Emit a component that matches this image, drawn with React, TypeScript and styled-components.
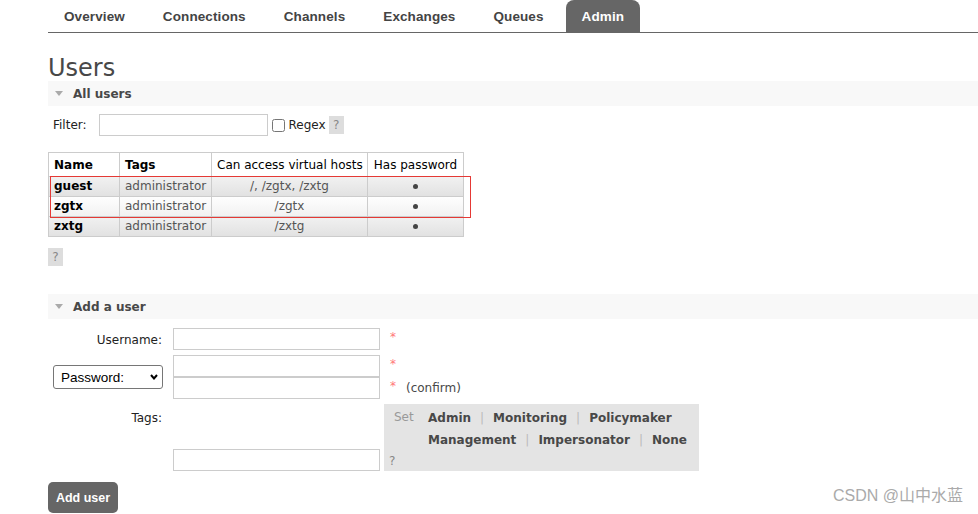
import React from "react";
import styled, { createGlobalStyle, css } from "styled-components";

const GlobalStyle = createGlobalStyle`
  html, body {
    margin: 0;
    padding: 0;
    background: #fff;
    overflow: hidden;
  }
  body {
    font-family: "DejaVu Sans", Verdana, sans-serif;
    font-size: 12px;
    color: #484848;
  }
  * {
    box-sizing: border-box;
  }
`;

const Page = styled.div`
  position: relative;
  height: 514px;
  padding-left: 48px;
`;

const Nav = styled.ul`
  display: flex;
  gap: 6px;
  margin: 0;
  padding: 0;
  list-style: none;
  border-bottom: 1px solid #666;
`;

const Tab = styled.li<{ $active?: boolean }>`
  height: 32px;
  line-height: 33px;
  padding: 0 16px;
  font-family: "Liberation Sans", Arial, sans-serif;
  font-weight: bold;
  font-size: 13.5px;
  letter-spacing: 0.1px;
  color: #444;
  border-radius: 8px 8px 0 0;
  ${(p) =>
    p.$active &&
    css`
      background: #666;
      color: #fff;
    `}
`;

const Title = styled.h1`
  margin: 23px 0 0;
  font-size: 24px;
  line-height: 25px;
  font-weight: normal;
  color: #484848;
`;

const SectionHeader = styled.h2<{ $gap?: number }>`
  display: flex;
  align-items: center;
  gap: 10px;
  margin: ${(p) => p.$gap ?? 0}px 0 0;
  height: 25px;
  padding-left: 7px;
  background: #f8f8f8;
  font-size: 12px;
  font-weight: bold;
  color: #484848;
`;

const Arrow = () => (
  <svg width="8" height="5" viewBox="0 0 8 5">
    <path d="M0 0 L8 0 L4 5 Z" fill="#aaa" />
  </svg>
);

const FilterRow = styled.div`
  display: flex;
  align-items: center;
  height: 22px;
  margin-top: 8px;
  padding-left: 5px;
  color: #222;
`;

const TextInput = styled.input<{ $w: number; $ml?: number }>`
  display: block;
  width: ${(p) => p.$w}px;
  height: 22px;
  margin: 0 0 0 ${(p) => p.$ml ?? 0}px;
  padding: 2px 4px;
  border: 1px solid #ccc;
  font: inherit;
  outline: none;
  background: #fff;
`;

const Check = styled.input`
  width: 13px;
  height: 13px;
  margin: 0 4px;
`;

const Help = styled.span<{ $ml?: number }>`
  display: inline-block;
  width: 15px;
  height: 18px;
  line-height: 18px;
  margin-left: ${(p) => p.$ml ?? 0}px;
  text-align: center;
  background: #ddd;
  color: #888;
`;

const TableWrap = styled.div`
  position: relative;
  width: fit-content;
  margin-top: 16px;
`;

const UserTable = styled.table`
  border-collapse: collapse;
  table-layout: fixed;
  width: 415px;
`;

const Th = styled.th<{ $w: number; $center?: boolean; $bold?: boolean }>`
  width: ${(p) => p.$w}px;
  height: 24px;
  padding: 0 5px;
  line-height: 22px;
  text-align: ${(p) => (p.$center ? "center" : "left")};
  font-weight: ${(p) => (p.$bold ? "bold" : "normal")};
  color: #000;
  background: #fff;
  border: 1px solid #ccc;
  white-space: nowrap;
`;

const Row = styled.tr<{ $alt: boolean }>`
  background: ${(p) =>
    p.$alt
      ? "linear-gradient(#fefefe, #f1f1f1)"
      : "linear-gradient(#f1f1f1, #e1e1e1)"};
`;

const Td = styled.td<{ $center?: boolean; $strong?: boolean }>`
  height: 20px;
  padding: 0 5px;
  line-height: 19px;
  text-align: ${(p) => (p.$center ? "center" : "left")};
  font-weight: ${(p) => (p.$strong ? "bold" : "normal")};
  color: ${(p) => (p.$strong ? "#000" : "#555")};
  border: 1px solid #ccc;
  white-space: nowrap;
`;

const Dot = styled.span`
  display: inline-block;
  width: 5px;
  height: 5px;
  border-radius: 50%;
  background: #444;
  vertical-align: middle;
`;

const Highlight = styled.div`
  position: absolute;
  left: 2px;
  top: 24px;
  width: 421px;
  height: 42px;
  border: 1px solid #e53935;
  pointer-events: none;
`;

const HelpLine = styled.div`
  margin-top: 11px;
`;

const Form = styled.div`
  display: grid;
  grid-template-columns: 125px 207px auto;
  row-gap: 5px;
  margin-top: 9px;
  align-items: start;
`;

const Label = styled.label<{ $pt?: number }>`
  display: block;
  padding: ${(p) => p.$pt ?? 2}px 11px 0 0;
  line-height: 20px;
  text-align: right;
  color: #222;
`;

const Stack = styled.div<{ $end?: boolean }>`
  display: flex;
  flex-direction: column;
  align-self: ${(p) => (p.$end ? "end" : "start")};
`;

const Note = styled.div`
  display: flex;
  align-items: center;
  height: 22px;
  padding-left: 10px;
  color: #484848;
`;

const Star = styled.span<{ $up?: boolean }>`
  position: relative;
  top: ${(p) => (p.$up ? -2 : 0)}px;
  color: #f77;
  margin-right: 10px;
`;

const SelectWrap = styled.div`
  position: relative;
  width: 110px;
  margin-left: 5px;
  align-self: center;
`;

const Select = styled.select`
  appearance: none;
  display: block;
  width: 110px;
  height: 24px;
  margin: 0;
  padding: 0 0 0 7px;
  border: 1px solid #767676;
  border-radius: 3px;
  background: #fff;
  font: 13.5px "Liberation Sans", Arial, sans-serif;
  color: #000;
`;

const Chevron = styled.svg`
  position: absolute;
  right: 5px;
  top: 9px;
  pointer-events: none;
`;

const TagBox = styled.div`
  width: 315px;
  margin-left: 4px;
  padding-top: 3px;
  background: #e4e4e4;
  line-height: 22px;
`;

const TagGrid = styled.div`
  display: grid;
  grid-template-columns: 34px auto;
  padding-left: 10px;
`;

const SetWord = styled.span`
  color: #999;
  line-height: 20px;
`;

const TagLink = styled.span`
  font-weight: bold;
  color: #484848;
`;

const Sep = styled.span`
  margin: 0 9px;
  color: #bbb;
`;

const TagHelp = styled.div`
  padding-left: 5px;
  line-height: 20px;
  color: #888;
`;

const Button = styled.button`
  display: block;
  width: 70px;
  height: 31px;
  margin-top: 11px;
  padding: 0;
  border: none;
  border-radius: 5px;
  background: #666;
  color: #fff;
  font: bold 12.5px "Liberation Sans", Arial, sans-serif;
`;

const Watermark = styled.div`
  position: absolute;
  top: 486px;
  right: 15px;
  font: 16px "Liberation Sans", "Noto Sans CJK SC", sans-serif;
  line-height: 20px;
  color: #aaa;
`;

const tabs = ["Overview", "Connections", "Channels", "Exchanges", "Queues", "Admin"];

const users = [
  { name: "guest", tags: "administrator", vhosts: "/, /zgtx, /zxtg" },
  { name: "zgtx", tags: "administrator", vhosts: "/zgtx" },
  { name: "zxtg", tags: "administrator", vhosts: "/zxtg" },
];

const tagRows = [
  ["Admin", "Monitoring", "Policymaker"],
  ["Management", "Impersonator", "None"],
];

export default function App() {
  return (
    <Page>
      <GlobalStyle />
      <Nav>
        {tabs.map((t) => (
          <Tab key={t} $active={t === "Admin"}>
            {t}
          </Tab>
        ))}
      </Nav>

      <Title>Users</Title>

      <SectionHeader>
        <Arrow />
        All users
      </SectionHeader>
      <FilterRow>
        Filter:
        <TextInput type="text" $w={169} $ml={12} />
        <Check type="checkbox" />
        Regex
        <Help $ml={3}>?</Help>
      </FilterRow>

      <TableWrap>
        <UserTable>
          <thead>
            <tr>
              <Th $w={71} $bold>Name</Th>
              <Th $w={92} $bold>Tags</Th>
              <Th $w={156} $center>Can access virtual hosts</Th>
              <Th $w={96} $center>Has password</Th>
            </tr>
          </thead>
          <tbody>
            {users.map((u, i) => (
              <Row key={u.name} $alt={i % 2 === 1}>
                <Td $strong>{u.name}</Td>
                <Td>{u.tags}</Td>
                <Td $center>{u.vhosts}</Td>
                <Td $center>
                  <Dot />
                </Td>
              </Row>
            ))}
          </tbody>
        </UserTable>
        <Highlight />
      </TableWrap>
      <HelpLine>
        <Help>?</Help>
      </HelpLine>

      <SectionHeader $gap={28}>
        <Arrow />
        Add a user
      </SectionHeader>
      <Form>
        <Label>Username:</Label>
        <TextInput type="text" $w={207} />
        <Note>
          <Star $up>*</Star>
        </Note>

        <SelectWrap>
          <Select defaultValue="password">
            <option value="password">Password:</option>
            <option value="hash">Password hash:</option>
          </Select>
          <Chevron width="8" height="6" viewBox="0 0 8 6">
            <path d="M1 1 L4 4.5 L7 1" fill="none" stroke="#000" strokeWidth="2" />
          </Chevron>
        </SelectWrap>
        <Stack>
          <TextInput type="password" $w={207} />
          <TextInput type="password" $w={207} />
        </Stack>
        <Stack>
          <Note>
            <Star $up>*</Star>
          </Note>
          <Note>
            <Star $up>*</Star>(confirm)
          </Note>
        </Stack>

        <Label $pt={4}>Tags:</Label>
        <Stack $end>
          <TextInput type="text" $w={207} />
        </Stack>
        <TagBox>
          <TagGrid>
            <SetWord>Set</SetWord>
            <div>
              {tagRows.map((row) => (
                <div key={row[0]}>
                  {row.map((tag, j) => (
                    <React.Fragment key={tag}>
                      {j > 0 && <Sep>|</Sep>}
                      <TagLink>{tag}</TagLink>
                    </React.Fragment>
                  ))}
                </div>
              ))}
            </div>
          </TagGrid>
          <TagHelp>?</TagHelp>
        </TagBox>
      </Form>
      <Button>Add user</Button>

      <Watermark>CSDN @山中水蓝</Watermark>
    </Page>
  );
}
